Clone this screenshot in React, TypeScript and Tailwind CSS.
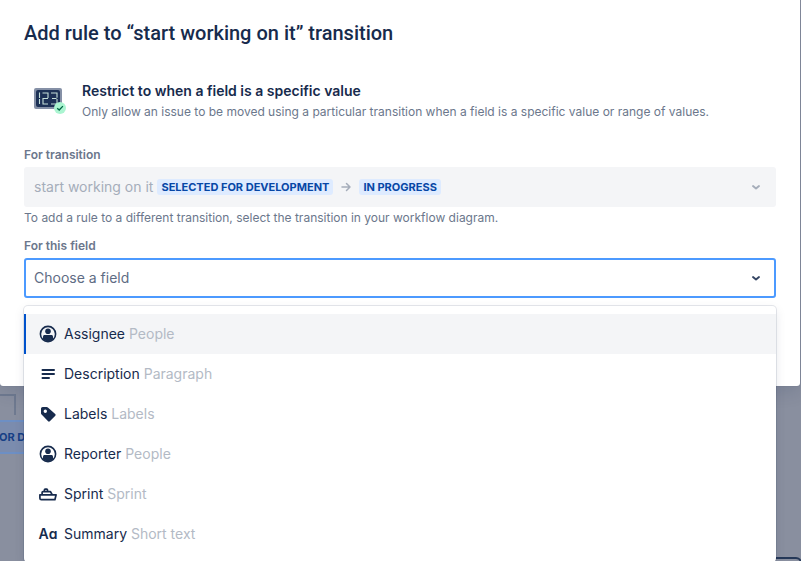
import { useState } from "react";
import type { ReactNode } from "react";

interface FieldOption {
  id: string;
  name: string;
  type: string;
  icon: ReactNode;
}

function PersonIcon() {
  return (
    <svg viewBox="0 0 18 18" className="size-[18px]" aria-hidden="true">
      <circle cx="9" cy="9" r="7.6" fill="none" stroke="currentColor" strokeWidth="1.6" />
      <circle cx="9" cy="6.2" r="2.8" fill="currentColor" />
      <path
        d="M4 11.6C4 10.7 4.7 10 5.6 10h6.8c.9 0 1.6.7 1.6 1.6v2.6A7.3 7.3 0 0 1 9 16.4a7.3 7.3 0 0 1-5-2.2z"
        fill="currentColor"
      />
    </svg>
  );
}

function ParagraphIcon() {
  return (
    <svg viewBox="0 0 18 18" className="size-[18px]" aria-hidden="true">
      <path
        d="M3.5 5h11.5M3.5 9h11.5M3.5 13h6.5"
        fill="none"
        stroke="currentColor"
        strokeWidth="2"
        strokeLinecap="round"
      />
    </svg>
  );
}

function LabelIcon() {
  return (
    <svg viewBox="0 0 18 18" className="size-[18px]" aria-hidden="true">
      <path
        fillRule="evenodd"
        d="M2 3.8C2 2.8 2.7 2 3.7 2h3.9c.5 0 1 .2 1.3.5l7.300 6.600c.6.5.6 1.200.1 1.700l-5.500 5.500c-.5.5-1.200.5-1.700 0L2.600 9.600C2.200 9.200 2 8.700 2 8.200zM6.300 7.900a1.700 1.700 0 1 0 0-3.400 1.700 1.700 0 0 0 0 3.400z"
        fill="currentColor"
      />
    </svg>
  );
}

function SprintIcon() {
  return (
    <svg viewBox="0 0 18 18" className="size-[18px]" aria-hidden="true">
      <g fill="none" stroke="currentColor" strokeWidth="1.700" strokeLinejoin="round">
        <path d="M.9 9.800h16.200l-1.200 4.900H2.400c-.8 0-1.500-.6-1.500-1.400z" />
        <path d="M3.100 9.600V7.600c0-.5.300-.9.900-.9h7.500l1.700 2.900" />
        <path d="M5.400 6.500V4.900c0-.5.300-.8.800-.8h1.500c.5 0 .8.300.8.800v1.600" />
      </g>
    </svg>
  );
}

function ShortTextIcon() {
  return (
    <span className="text-sm leading-4 font-semibold" aria-hidden="true">
      Aɑ
    </span>
  );
}

function RuleIcon() {
  return (
    <svg viewBox="0 0 34 30" className="h-[30px] w-[34px]" aria-hidden="true">
      <rect x="0" y="2" width="28" height="21" rx="2" fill="#8590a6" />
      <rect x="2" y="4" width="24" height="17" rx="2" fill="#1d3156" />
      <g fill="none" stroke="#c5dfd9" strokeWidth="1.100">
        <path d="M5.500 6.500v5.500M5.500 13v5" />
        <path d="M8.500 7h5.500v5M14 12.500H9v5.500h5" />
        <path d="M17 7h6v4.800M23 13v5h-6M18 12.500h4.500" />
      </g>
      <circle cx="26" cy="22" r="6" fill="#abf5d1" />
      <path d="m23.200 22.200 2 1.800 3.700-3.900" fill="none" stroke="#006644" strokeWidth="1.300" />
    </svg>
  );
}

function ChevronIcon() {
  return (
    <svg viewBox="0 0 10 10" className="size-[10px] shrink-0" aria-hidden="true">
      <path
        d="M2 4 5 6.500 8 4"
        fill="none"
        stroke="currentColor"
        strokeWidth="1.900"
        strokeLinecap="round"
        strokeLinejoin="round"
      />
    </svg>
  );
}

function ArrowIcon() {
  return (
    <svg viewBox="0 0 12 12" className="size-3 text-[#a5adba]" aria-hidden="true">
      <path
        d="M2 6h8M6.500 2.500 10 6l-3.500 3.500"
        fill="none"
        stroke="currentColor"
        strokeWidth="1.500"
        strokeLinecap="round"
        strokeLinejoin="round"
      />
    </svg>
  );
}

function Lozenge({ children }: { children: ReactNode }) {
  return (
    <span className="rounded-[3px] bg-[#deebff] px-1 text-[11px] leading-4 font-bold text-[#0747a6] uppercase">
      {children}
    </span>
  );
}

const FIELDS: FieldOption[] = [
  { id: "assignee", name: "Assignee", type: "People", icon: <PersonIcon /> },
  { id: "description", name: "Description", type: "Paragraph", icon: <ParagraphIcon /> },
  { id: "labels", name: "Labels", type: "Labels", icon: <LabelIcon /> },
  { id: "reporter", name: "Reporter", type: "People", icon: <PersonIcon /> },
  { id: "sprint", name: "Sprint", type: "Sprint", icon: <SprintIcon /> },
  { id: "summary", name: "Summary", type: "Short text", icon: <ShortTextIcon /> },
];

// Workflow diagram that shows through behind the dialog
function WorkflowCanvas() {
  return (
    <div className="absolute inset-0 overflow-hidden" aria-hidden="true">
      <div className="absolute top-[394px] -left-2 h-[21px] w-6 border-t-2 border-r-2 border-[#6f7a90]" />
      <div className="absolute top-[420px] -left-1 flex h-[34px] w-20 items-center border-2 border-[#6d8fc4] bg-[#7b8cae] pl-px text-[11px] font-bold whitespace-nowrap text-[#163f85]">
        OR D
      </div>
      <div className="absolute top-[557px] -right-px h-10 w-40 rounded-md border-2 border-[#253858]" />
    </div>
  );
}

function FieldSelect() {
  const [query, setQuery] = useState("");
  const [activeId, setActiveId] = useState("assignee");

  return (
    <div className="relative">
      <div className="flex h-10 items-center rounded-[3px] border-2 border-[#4c9aff] bg-white pr-[13px] pl-2 text-[#344563]">
        <input
          id="field"
          role="combobox"
          aria-expanded="true"
          aria-controls="field-options"
          aria-activedescendant={activeId}
          autoComplete="off"
          placeholder="Choose a field"
          value={query}
          onChange={(e) => setQuery(e.target.value)}
          className="min-w-0 flex-1 bg-transparent text-sm text-[#172b4d] outline-none placeholder:text-[#5e6c84]"
        />
        <ChevronIcon />
      </div>

      <ul
        id="field-options"
        role="listbox"
        aria-label="For this field"
        className="absolute inset-x-0 top-full mt-2 rounded-[4px] bg-white py-2 shadow-[0_0_0_1px_rgba(9,30,66,0.1),0_4px_11px_rgba(9,30,66,0.1)]"
      >
        {FIELDS.map((field) => (
          <li
            key={field.id}
            id={field.id}
            role="option"
            aria-selected={field.id === activeId}
            onMouseEnter={() => setActiveId(field.id)}
            className={
              field.id === activeId
                ? "flex h-10 items-center gap-[7px] border-l-2 border-[#0052cc] bg-[#f4f5f7] pl-[13px] text-sm"
                : "flex h-10 items-center gap-[7px] border-l-2 border-transparent pl-[13px] text-sm"
            }
          >
            <span className="flex w-[18px] justify-center">{field.icon}</span>
            <span>
              {field.name} <span className="text-[#b3bac5]">{field.type}</span>
            </span>
          </li>
        ))}
      </ul>
    </div>
  );
}

export default function App() {
  return (
    <div className="relative h-screen overflow-hidden bg-[#898f9f] pr-px font-[Inter,sans-serif] text-[#172b4d]">
      <WorkflowCanvas />

      <section
        role="dialog"
        aria-labelledby="dialog-title"
        className="relative rounded-b-[3px] bg-white px-6 pt-[21px] pb-[88px] shadow-[0_0_1px_rgba(9,30,66,0.3),0_8px_16px_rgba(9,30,66,0.1)]"
      >
        <h1 id="dialog-title" className="font-[Roboto,sans-serif] text-xl leading-6 font-medium">
          Add rule to “start working on it” transition
        </h1>

        <div className="mt-9 flex items-start gap-[14px] pl-[10px]">
          <div className="mt-[5px] shrink-0">
            <RuleIcon />
          </div>
          <div>
            <h2 className="text-sm leading-5 font-semibold">
              Restrict to when a field is a specific value
            </h2>
            <p className="mt-px text-xs leading-5 text-[#6b778c]">
              Only allow an issue to be moved using a particular transition when a field is a
              specific value or range of values.
            </p>
          </div>
        </div>

        <label htmlFor="transition" className="mt-[25px] block text-xs font-semibold text-[#6b778c]">
          For transition
        </label>
        <button
          id="transition"
          type="button"
          disabled
          className="mt-1 flex h-10 w-full items-center rounded-[3px] bg-[#f4f5f7] pr-[15px] pl-[10px] text-left text-sm text-[#a5adba]"
        >
          <span className="flex flex-1 items-center">
            <span className="mr-1">start working on it</span>
            <Lozenge>Selected for development</Lozenge>
            <span className="mx-[7px]">
              <ArrowIcon />
            </span>
            <Lozenge>In progress</Lozenge>
          </span>
          <ChevronIcon />
        </button>
        <p className="mt-[3px] text-xs text-[#6b778c]">
          To add a rule to a different transition, select the transition in your workflow diagram.
        </p>

        <label htmlFor="field" className="mt-3 mb-1 block text-xs font-semibold text-[#6b778c]">
          For this field
        </label>
        <FieldSelect />
      </section>
    </div>
  );
}
